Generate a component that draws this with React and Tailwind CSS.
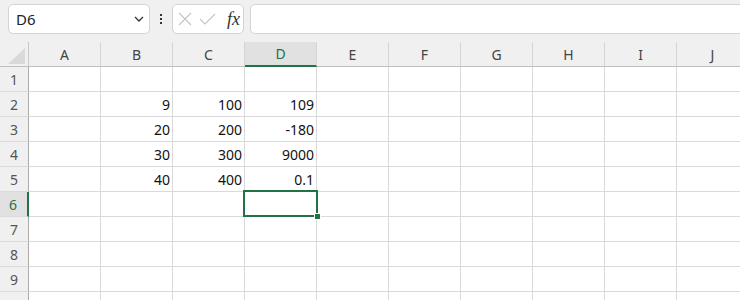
import React from 'react';

const COLS = ['A', 'B', 'C', 'D', 'E', 'F', 'G', 'H', 'I', 'J'];

// values by row number, columns B, C, D
const DATA = {
  2: ['9', '100', '109'],
  3: ['20', '200', '-180'],
  4: ['30', '300', '9000'],
  5: ['40', '400', '0.1'],
};

function Toolbar() {
  return (
    <div className="h-[42px] flex items-start pt-[4px] pl-[8px]">
      {/* Name box */}
      <div className="w-[142px] h-[30px] shrink-0 bg-white border border-[#d4d4d4] rounded-[5px] flex items-center justify-between pl-[7px] pr-[5px]">
        <span className="text-[15px] text-[#222]">D6</span>
        <svg width="10" height="6" viewBox="0 0 10 6">
          <path d="M1 1 L5 5 L9 1" fill="none" stroke="#333" strokeWidth="1.3" />
        </svg>
      </div>

      {/* more dots */}
      <div className="w-[22px] h-[30px] shrink-0 flex flex-col items-center justify-center gap-[2px]">
        <span className="w-[2px] h-[2px] bg-[#333]"></span>
        <span className="w-[2px] h-[2px] bg-[#333]"></span>
        <span className="w-[2px] h-[2px] bg-[#333]"></span>
      </div>

      {/* cancel / enter / fx */}
      <div className="w-[72px] h-[30px] shrink-0 bg-white border border-[#d4d4d4] rounded-[5px] flex items-center pl-[5px]">
        <svg width="14" height="14" viewBox="0 0 14 14">
          <path d="M1 1 L13 13 M13 1 L1 13" stroke="#c4c4c4" strokeWidth="1.1" fill="none" />
        </svg>
        <svg width="17" height="12" viewBox="0 0 17 12" className="ml-[7px]">
          <path d="M1 6 L6 11 L16 1" stroke="#c4c4c4" strokeWidth="1.1" fill="none" />
        </svg>
        <span className="ml-[11px] text-[18px] italic text-[#333] leading-none font-['Liberation_Serif',serif]">fx</span>
      </div>

      {/* formula input */}
      <div className="ml-[6px] w-[520px] h-[30px] shrink-0 bg-white border border-[#d4d4d4] rounded-[5px]"></div>
    </div>
  );
}

function HeaderRow() {
  return (
    <div className="flex h-[25px]">
      <div className="w-[29px] shrink-0 border-r border-[#c8c8c8] border-b border-b-[#bfbfbf] flex items-end justify-start pl-[8px] pb-[2px]">
        <svg width="17" height="16" viewBox="0 0 17 16">
          <path d="M17 0 L17 16 L0 16 Z" fill="#d9d9d9" />
        </svg>
      </div>
      {COLS.map((c) => {
        const sel = c === 'D';
        return (
          <div
            key={c}
            className={
              sel
                ? 'w-[72px] shrink-0 border-r border-[#d4d4d4] border-b-2 border-b-[#217346] bg-[#e1e1e1] flex items-center justify-center text-[14px] text-[#217346]'
                : 'w-[72px] shrink-0 border-r border-[#d4d4d4] border-b border-b-[#bfbfbf] flex items-center justify-center text-[14px] text-[#444]'
            }
          >
            {c}
          </div>
        );
      })}
    </div>
  );
}

function Row({ n }) {
  const vals = DATA[n];
  const sel = n === 6;
  return (
    <div className="flex h-[25px]">
      <div
        className={
          sel
            ? 'w-[29px] shrink-0 border-r-2 border-[#217346] border-b border-b-[#dadada] bg-[#e1e1e1] flex items-center justify-center text-[14px] text-[#217346] pr-[1px]'
            : 'w-[29px] shrink-0 border-r border-[#ababab] border-b border-b-[#dadada] flex items-center justify-center text-[14px] text-[#555]'
        }
      >
        {n}
      </div>
      {COLS.map((c, i) => {
        let v = '';
        if (vals && i >= 1 && i <= 3) v = vals[i - 1];
        const active = sel && c === 'D';
        return (
          <div
            key={c}
            className={
              active
                ? 'relative z-10 w-[72px] shrink-0 border-r border-b border-[#dadada] bg-white flex items-center justify-end pr-[2px] text-[14px] text-[#111]'
                : 'relative w-[72px] shrink-0 border-r border-b border-[#dadada] bg-white flex items-center justify-end pr-[2px] text-[14px] text-[#111]'
            }
          >
            {v}
            {active && (
              <>
                <div className="absolute left-[-2px] top-[-2px] w-[75px] h-[27px] border-2 border-[#217346]"></div>
                <div className="absolute left-[69px] top-[21px] w-[7px] h-[7px] bg-[#217346] border border-white"></div>
              </>
            )}
          </div>
        );
      })}
    </div>
  );
}

export default function App() {
  return (
    <div className="w-[740px] h-[300px] overflow-hidden bg-[#f0f0f0] font-['Noto_Sans','Liberation_Sans',sans-serif]">
      <Toolbar />
      <div className="w-[800px]">
        <HeaderRow />
        {[1, 2, 3, 4, 5, 6, 7, 8, 9, 10].map((n) => (
          <Row key={n} n={n} />
        ))}
      </div>
    </div>
  );
}
